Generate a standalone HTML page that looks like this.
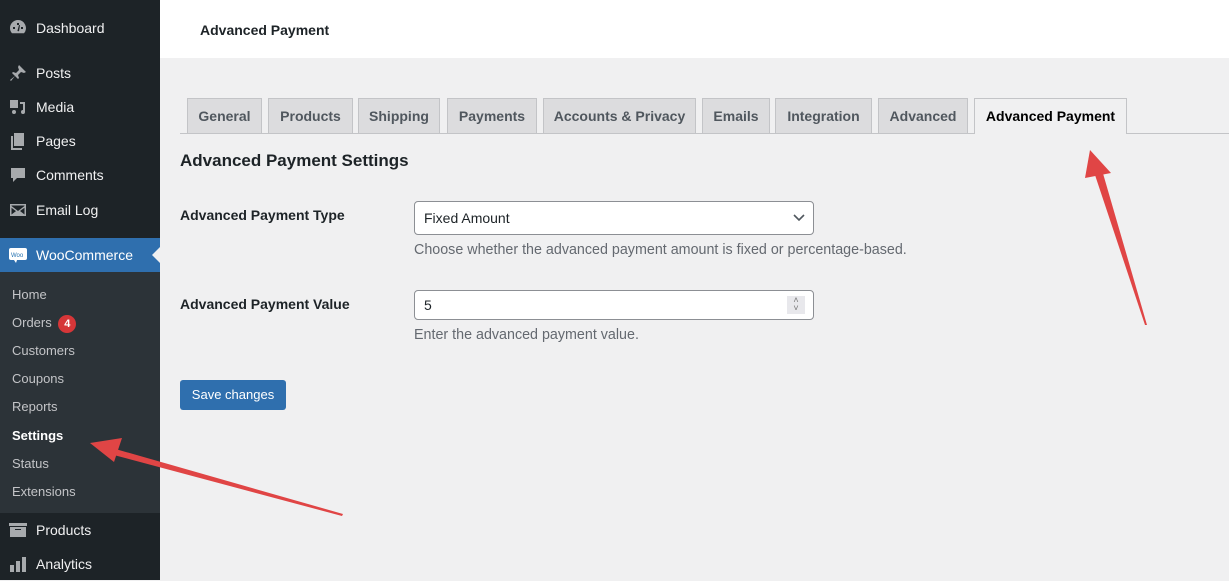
<!DOCTYPE html>
<html><head><meta charset="utf-8"><style>
*{margin:0;padding:0;box-sizing:border-box}
body{width:1229px;height:580px;overflow:hidden;background:#f0f0f1;font-family:"Liberation Sans",sans-serif;position:relative;color:#1d2327}
.sb{position:absolute;left:0;top:0;width:160px;height:580px;background:#1d2327}
.mi{position:absolute;left:0;width:160px;height:34px;color:#f0f0f1;font-size:14px;line-height:34px;padding-left:36px}
.ic{position:absolute;left:8px;top:7px;width:20px;height:20px;fill:#a7aaad}
.sub{position:absolute;left:0;top:272px;width:160px;height:241px;background:#2c3338}
.si{position:absolute;left:12px;font-size:13px;color:#c3c4c7}
.hdr{position:absolute;left:160px;top:0;right:0;height:58px;background:#fff}
.tab{position:absolute;top:98px;height:35px;background:#dcdcde;border:1px solid #c3c4c7;border-bottom:none;font-size:14px;font-weight:bold;color:#50575e;line-height:34px;text-align:center}
.lab{position:absolute;left:180px;font-size:14px;font-weight:bold}
.desc{position:absolute;left:414px;font-size:14.3px;color:#646970}
.inp{position:absolute;left:414px;width:400px;background:#fff;border:1px solid #8c8f94;border-radius:4px;font-size:14px;padding-left:9px}
</style></head><body>
<div class="sb">
<div class="mi" style="top:11px">Dashboard<svg class="ic" viewBox="0 0 20 20"><path d="M10 2a8 8 0 0 0-8 8c0 2 .7 3.8 2 5.2h12A8 8 0 0 0 10 2zm-1 3h2v2H9zM5 9h2v2H5zm8 0h2v2h-2zm-3.6 4 1.6-6 1 .3-1 6z"/></svg></div>
<div class="mi" style="top:56px">Posts<svg class="ic" viewBox="0 0 20 20"><path d="M11 2l7 7-2 1-3-1-3 3 1 3-1 1-3-3-4 5-1-1 5-4-3-3 1-1 3 1 3-3-1-3z"/></svg></div>
<div class="mi" style="top:90px">Media<svg class="ic" viewBox="0 0 20 20"><path d="M2 3h8v8H2zM12 5h5v10a2 2 0 1 1-2-2V7h-3zM6 13a2 2 0 1 1 0 4 2 2 0 0 1 0-4z"/></svg></div>
<div class="mi" style="top:124px">Pages<svg class="ic" viewBox="0 0 20 20"><path d="M6 2h10v13H6zM3 5h2v12h9v2H3z"/></svg></div>
<div class="mi" style="top:158px">Comments<svg class="ic" viewBox="0 0 20 20"><path d="M3 3h14v10H9l-4 4v-4H3z"/></svg></div>
<div class="mi" style="top:193px">Email Log<svg class="ic" viewBox="0 0 20 20"><path d="M2 4h16v12H2zm1.5 1.5v.5L10 11l6.5-5v-.5zm0 2.2v6.8l4.5-3.4zm13 0L12 11l4.5 3.5z"/></svg></div>
<div class="mi" style="top:238px;background:#2f6fae;color:#fff">WooCommerce<svg class="ic" viewBox="0 0 20 20" style="fill:#fff"><rect x="1" y="3" width="18" height="12" rx="2"/><path d="M6 15l2 3 1-3z"/><text x="3" y="12" font-size="6" fill="#2271b1" font-family="Liberation Sans">Woo</text></svg>
<div style="position:absolute;right:0;top:9px;border:8px solid transparent;border-right-color:#f0f0f1"></div></div>
<div class="sub">
<div class="si" style="top:15px">Home</div>
<div class="si" style="top:43px">Orders <span style="display:inline-block;background:#d63638;color:#fff;border-radius:9px;width:18px;height:18px;text-align:center;line-height:18px;font-size:11px;font-weight:bold;margin-left:3px">4</span></div>
<div class="si" style="top:71px">Customers</div>
<div class="si" style="top:99px">Coupons</div>
<div class="si" style="top:127px">Reports</div>
<div class="si" style="top:156px;color:#fff;font-weight:bold">Settings</div>
<div class="si" style="top:184px">Status</div>
<div class="si" style="top:212px">Extensions</div>
</div>
<div class="mi" style="top:513px">Products<svg class="ic" viewBox="0 0 20 20"><path d="M1 3h18v3H1zM2 7h16v10H2zm5 2v1h6V9z"/></svg></div>
<div class="mi" style="top:547px">Analytics<svg class="ic" viewBox="0 0 20 20"><path d="M2 11h4v7H2zm6-4h4v11H8zm6-4h4v15h-4z"/></svg></div>
</div>
<div class="hdr"><div style="position:absolute;left:40px;top:22px;font-size:14px;font-weight:bold">Advanced Payment</div></div>
<div style="position:absolute;left:180px;right:0;top:133px;height:1px;background:#c3c4c7"></div>
<div class="tab" style="left:187px;width:75px">General</div>
<div class="tab" style="left:268px;width:85px">Products</div>
<div class="tab" style="left:358px;width:82px">Shipping</div>
<div class="tab" style="left:447px;width:90px">Payments</div>
<div class="tab" style="left:543px;width:153px">Accounts &amp; Privacy</div>
<div class="tab" style="left:702px;width:68px">Emails</div>
<div class="tab" style="left:775px;width:97px">Integration</div>
<div class="tab" style="left:878px;width:90px">Advanced</div>
<div class="tab" style="left:974px;width:153px;height:36px;background:#f0f0f1;color:#000">Advanced Payment</div>
<div style="position:absolute;left:180px;top:151px;font-size:17px;font-weight:bold">Advanced Payment Settings</div>
<div class="lab" style="top:207px">Advanced Payment Type</div>
<div class="inp" style="top:201px;height:34px;line-height:32px">Fixed Amount<svg style="position:absolute;right:8px;top:11px" width="12" height="10" viewBox="0 0 12 10"><path d="M1 2l5 5 5-5" stroke="#50575e" stroke-width="1.6" fill="none"/></svg></div>
<div class="desc" style="top:242px">Choose whether the advanced payment amount is fixed or percentage-based.</div>
<div class="lab" style="top:296px">Advanced Payment Value</div>
<div class="inp" style="top:290px;height:30px;line-height:28px">5<div style="position:absolute;right:8px;top:5px;width:18px;height:18px;background:#e8e8ec;font-size:9px;line-height:8px;text-align:center;color:#777">˄<br>˅</div></div>
<div class="desc" style="top:327px">Enter the advanced payment value.</div>
<div style="position:absolute;left:180px;top:380px;width:106px;height:30px;background:#2f6fae;border-radius:3px;color:#fff;font-size:13px;line-height:30px;text-align:center">Save changes</div>
<svg style="position:absolute;left:0;top:0" width="1229" height="580">
<polygon points="342,516 343,514 112,448 110,454" fill="#e04545"/>
<polygon points="90,443 122,438 114,462" fill="#e04545"/>
<polygon points="1147,325 1145,325 1094,172 1102,170" fill="#e04545"/>
<polygon points="1090,150 1111,173 1085,178" fill="#e04545"/>
</svg>
</body></html>
